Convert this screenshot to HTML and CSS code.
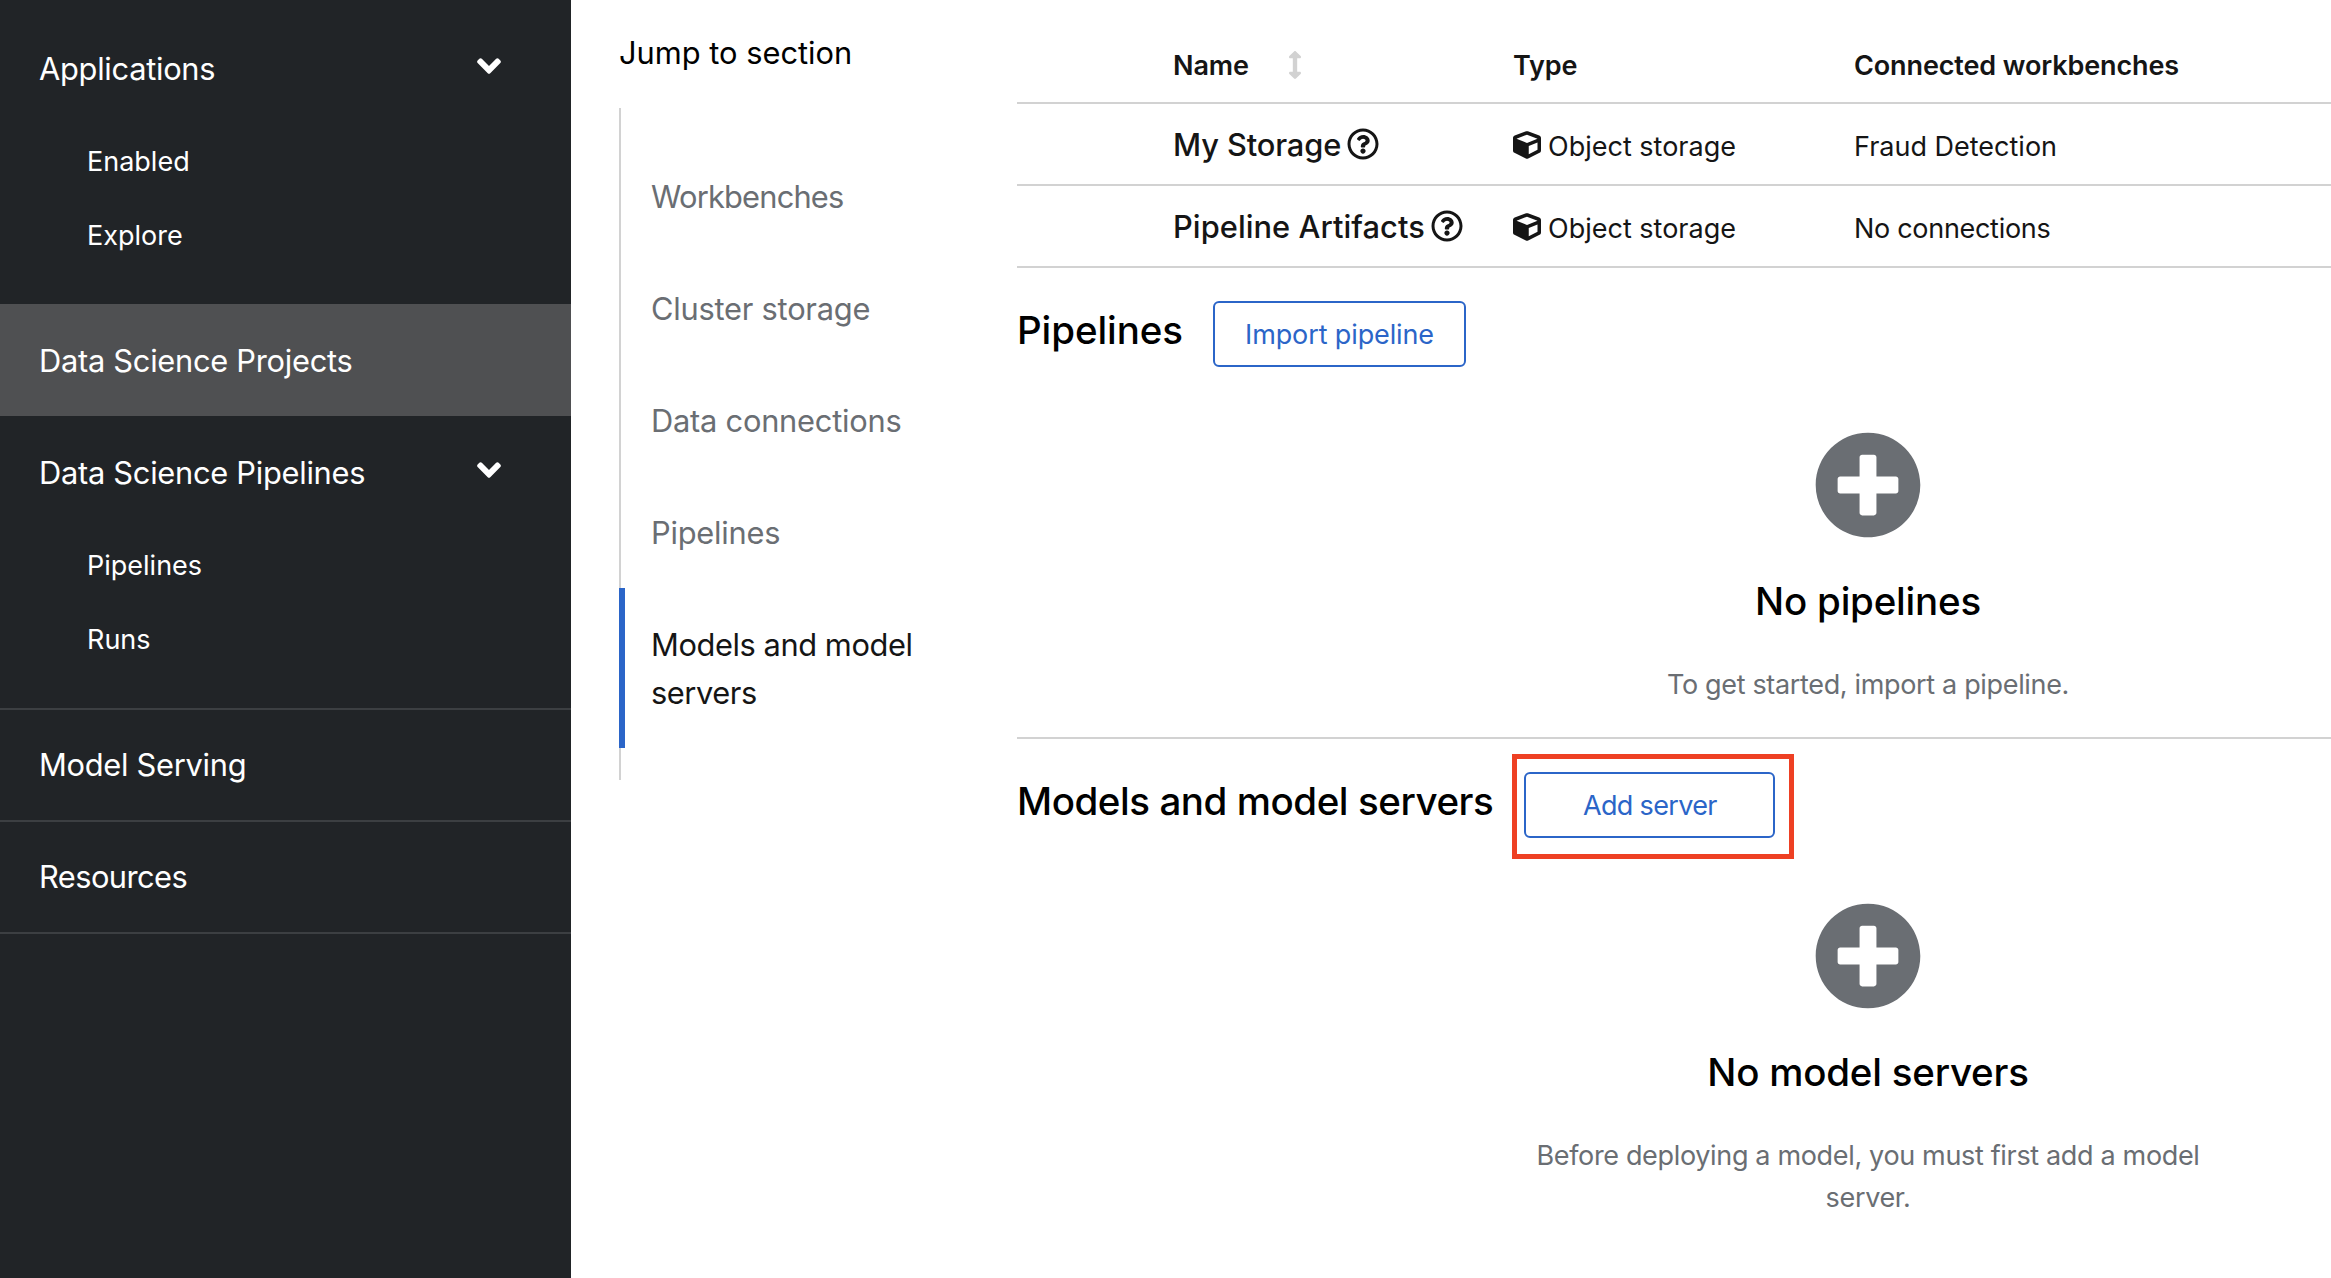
FILE: index.html
```html
<!DOCTYPE html>
<html lang="en">
<head>
<meta charset="utf-8">
<title>Data Science Projects</title>
<link rel="stylesheet" href="styles.css">
</head>
<body>
<svg class="sprite" aria-hidden="true">
  <symbol id="angle" viewBox="0 0 320 512"><path d="M143 352.3L7 216.3c-9.4-9.4-9.4-24.6 0-33.9l22.6-22.6c9.4-9.4 24.6-9.4 33.9 0l96.4 96.4 96.4-96.4c9.4-9.4 24.6-9.4 33.9 0l22.6 22.6c9.4 9.4 9.4 24.6 0 33.9l-136 136c-9.2 9.4-24.4 9.4-33.8 0z"/></symbol>
  <symbol id="help" viewBox="0 0 512 512"><path d="M256 8C119.043 8 8 119.083 8 256c0 136.997 111.043 248 248 248s248-111.003 248-248C504 119.083 392.957 8 256 8zm0 448c-110.532 0-200-89.431-200-200 0-110.495 89.472-200 200-200 110.491 0 200 89.471 200 200 0 110.53-89.431 200-200 200zm107.244-255.2c0 67.052-72.421 68.084-72.421 92.863V300c0 6.627-5.373 12-12 12h-45.647c-6.627 0-12-5.373-12-12v-8.659c0-35.745 27.1-50.034 47.579-61.516 17.561-9.845 28.324-16.541 28.324-29.579 0-17.246-21.999-28.693-39.784-28.693-23.189 0-33.894 10.977-48.942 29.969-4.057 5.12-11.46 6.071-16.666 2.124l-27.824-21.098c-5.107-3.872-6.251-11.066-2.644-16.363C184.846 131.491 214.94 112 261.794 112c49.071 0 101.45 38.304 101.45 88.8zM298 368c0 23.159-18.841 42-42 42s-42-18.841-42-42 18.841-42 42-42 42 18.841 42 42z"/></symbol>
  <symbol id="cube" viewBox="0 0 512 512"><path d="M239.1 6.3l-208 78c-18.7 7-31.1 25-31.1 45v225.1c0 18.2 10.3 34.8 26.5 42.9l208 104c13.5 6.8 29.4 6.8 42.9 0l208-104c16.3-8.1 26.5-24.8 26.5-42.9V129.3c0-20-12.4-37.9-31.1-44.9l-208-78C262 2.2 250 2.2 239.1 6.3zM256 68.4l192 72v1.1l-192 78-192-78v-1.1l192-72zm32 356V275.5l160-65v133.9l-160 80z"/></symbol>
  <symbol id="sort" viewBox="0 0 256 512"><path d="M214.059 377.941H168V134.059h46.059c21.382 0 32.09-25.851 16.971-40.971L144.971 7.029c-9.373-9.373-24.568-9.373-33.941 0L24.971 93.088c-15.119 15.119-4.411 40.971 16.971 40.971H88v243.882H41.941c-21.382 0-32.09 25.851-16.971 40.971l86.059 86.059c9.373 9.373 24.568 9.373 33.941 0l86.059-86.059c15.12-15.119 4.412-40.971-16.97-40.971z"/></symbol>
  <symbol id="plus" viewBox="0 0 512 512"><path d="M256 8C119 8 8 119 8 256s111 248 248 248 248-111 248-248S393 8 256 8zm144 276c0 6.6-5.4 12-12 12h-92v92c0 6.6-5.4 12-12 12h-56c-6.6 0-12-5.4-12-12v-92h-92c-6.6 0-12-5.4-12-12v-56c0-6.6 5.4-12 12-12h92v-92c0-6.6 5.4-12 12-12h56c6.6 0 12 5.4 12 12v92h92c6.6 0 12 5.4 12 12v56z"/></symbol>
</svg>
<div class="page">
  <nav class="sidebar">
    <div class="nav-group">
      <a class="nav-link">Applications <svg class="angle"><use href="#angle"/></svg></a>
      <div class="subnav"><a>Enabled</a><a>Explore</a></div>
    </div>
    <a class="nav-link current">Data Science Projects</a>
    <div class="nav-group">
      <a class="nav-link">Data Science Pipelines <svg class="angle"><use href="#angle"/></svg></a>
      <div class="subnav"><a>Pipelines</a><a>Runs</a></div>
    </div>
    <a class="nav-link ruled">Model Serving</a>
    <a class="nav-link ruled tight">Resources</a>
    <div class="nav-end"></div>
  </nav>

  <aside class="jump">
    <div class="jump-title">Jump to section</div>
    <ul class="jump-list">
      <li class="tight">Workbenches</li>
      <li>Cluster storage</li>
      <li>Data connections</li>
      <li>Pipelines</li>
      <li class="active">Models and model servers</li>
    </ul>
  </aside>

  <main class="content">
    <div class="table">
      <div class="row head">
        <div class="name-head">Name <svg class="sort"><use href="#sort"/></svg></div>
        <div>Type</div>
        <div>Connected workbenches</div>
      </div>
      <div class="row">
        <div class="name tight">My Storage<svg class="help"><use href="#help"/></svg></div>
        <div><svg class="cube"><use href="#cube"/></svg>Object storage</div>
        <div class="workbench">Fraud Detection</div>
      </div>
      <div class="row">
        <div class="name">Pipeline Artifacts<svg class="help"><use href="#help"/></svg></div>
        <div><svg class="cube"><use href="#cube"/></svg>Object storage</div>
        <div class="workbench tight">No connections</div>
      </div>
    </div>

    <section class="section">
      <header class="section-head pipelines-head">
        <h2>Pipelines</h2>
        <button class="btn">Import pipeline</button>
      </header>
      <div class="empty">
        <svg class="plus"><use href="#plus"/></svg>
        <h3>No pipelines</h3>
        <p>To get started, import a pipeline.</p>
      </div>
    </section>

    <section class="section">
      <header class="section-head models-head">
        <h2>Models and model servers</h2>
        <div class="marked"><button class="btn add">Add server</button></div>
      </header>
      <div class="empty">
        <svg class="plus"><use href="#plus"/></svg>
        <h3>No model servers</h3>
        <p>Before deploying a model, you must first add a model server.</p>
      </div>
    </section>
  </main>
</div>
</body>
</html>
```
FILE: styles.css
```css
*, *::after { box-sizing: border-box; }
html, body { margin: 0; height: 100%; overflow: hidden; background: #fff; }
body {
  color: #151515;
  font-family: Inter, "Liberation Sans", sans-serif;
  font-size: 27px;
  line-height: 42px;
}
svg { fill: currentColor; flex: none; }
.sprite { display: none; }
.page { display: flex; height: 1278px; overflow: hidden; }

/* Sidebar */
.sidebar { flex: none; width: 571px; padding-top: 12px; background: #212427; color: #fff; }
.nav-link {
  display: flex;
  justify-content: space-between;
  padding: 33px 70px 31px 39px;
  font-size: 30.8px;
  line-height: 48px;
  letter-spacing: -0.27px;
}
.nav-link.current { background: #4f5052; }
.nav-link.ruled { border-top: 2px solid #3c3f42; padding-top: 31px; }
.nav-link.tight { letter-spacing: -0.55px; }
.nav-end { border-top: 2px solid #3c3f42; }
.angle { width: 24px; height: 38px; margin-top: 2px; }
.subnav { padding-bottom: 32px; }
.subnav a { display: block; padding: 17px 0 15px 87px; }

/* Section navigation */
.jump { flex: none; width: 446px; padding: 29px 80px 0 48px; font-size: 30.8px; line-height: 48px; }
.jump-title { color: #000; margin-bottom: 31px; }
.jump-list { list-style: none; margin: 0; padding: 32px 0; border-left: 2px solid #d2d2d2; color: #6a6e73; }
.jump-list li { padding: 33px 0 31px 30px; letter-spacing: -0.23px; }
.jump-list .tight { letter-spacing: -0.8px; }
.jump-list .active {
  margin-left: -2px;
  padding-left: 26px;
  border-left: 6px solid #2b65c8;
  color: #151515;
  letter-spacing: -0.42px;
}

/* Data connections table */
.content { flex: none; width: 1702px; }
.row {
  display: grid;
  grid-template-columns: 340px 341px 1fr;
  align-items: baseline;
  height: 82px;
  padding: 17px 0 0 156px;
  border-bottom: 2px solid #d2d2d2;
}
.row.head { height: 104px; padding-top: 45px; font-weight: 600; letter-spacing: -0.12px; }
.sort { width: 14px; height: 28px; margin-left: 33px; vertical-align: -4px; color: #d2d2d2; }
.name { font-size: 30.8px; font-weight: 500; line-height: 48px; letter-spacing: 0.06px; }
.name.tight { letter-spacing: -0.12px; }
.help { width: 32px; height: 32px; margin-left: 6px; vertical-align: -4px; }
.cube { width: 28px; height: 28px; margin-right: 7px; vertical-align: -3px; }
.workbench.tight { letter-spacing: -0.3px; }

/* Sections */
.section { padding: 33px 0 32px; }
.section + .section { border-top: 2px solid #d2d2d2; }
.section-head { display: flex; align-items: flex-start; }
.pipelines-head { gap: 30px; }
.models-head { gap: 31px; }
h2, h3 { margin: 0; color: #000; font-size: 38.5px; font-weight: 500; line-height: 52px; }
h2 { padding-top: 3px; letter-spacing: -0.08px; }
.models-head h2 { letter-spacing: -0.44px; }
h3 { letter-spacing: -0.22px; margin: 36px 0; }
.btn {
  display: block;
  width: 253px;
  height: 66px;
  padding: 1px 0 0;
  border: 2px solid #2b65c8;
  border-radius: 6px;
  background: #fff;
  color: #2b65c8;
  font: inherit;
  letter-spacing: -0.12px;
}
.btn.add { width: 251px; letter-spacing: -0.67px; }
.marked { position: relative; }
.marked::after {
  content: "";
  position: absolute;
  left: -12px;
  top: -18px;
  width: 282px;
  height: 105px;
  border: 5px solid #ee4023;
}
.empty { display: flex; flex-direction: column; align-items: center; padding-top: 64px; color: #6a6e73; text-align: center; }
.plus { width: 108px; height: 108px; }
.empty p { margin: 1px 0 -1px; width: 700px; letter-spacing: -0.34px; }
```
